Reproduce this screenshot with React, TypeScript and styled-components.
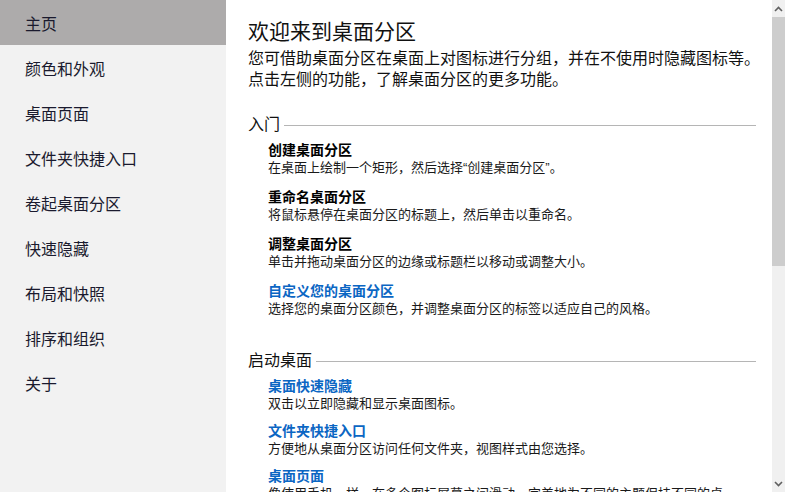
import React from 'react';
import { createGlobalStyle, styled } from 'styled-components';

const GlobalStyle = createGlobalStyle`
  html, body {
    margin: 0;
    padding: 0;
    height: 100%;
    overflow: hidden;
  }
  body {
    font-family: "Liberation Sans", "Noto Sans CJK SC", sans-serif;
    background: #ffffff;
  }
  #root {
    height: 100%;
  }
`;

interface Entry {
  title: string;
  desc: string;
  link?: boolean;
}

const NAV = ['主页', '颜色和外观', '桌面页面', '文件夹快捷入口', '卷起桌面分区', '快速隐藏', '布局和快照', '排序和组织', '关于'];

const SECTIONS: { name: string; gap: number; items: Entry[] }[] = [
  {
    name: '入门',
    gap: 13,
    items: [
      { title: '创建桌面分区', desc: '在桌面上绘制一个矩形，然后选择“创建桌面分区”。' },
      { title: '重命名桌面分区', desc: '将鼠标悬停在桌面分区的标题上，然后单击以重命名。' },
      { title: '调整桌面分区', desc: '单击并拖动桌面分区的边缘或标题栏以移动或调整大小。' },
      { title: '自定义您的桌面分区', desc: '选择您的桌面分区颜色，并调整桌面分区的标签以适应自己的风格。', link: true },
    ],
  },
  {
    name: '启动桌面',
    gap: 11,
    items: [
      { title: '桌面快速隐藏', desc: '双击以立即隐藏和显示桌面图标。', link: true },
      { title: '文件夹快捷入口', desc: '方便地从桌面分区访问任何文件夹，视图样式由您选择。', link: true },
      { title: '桌面页面', desc: '像使用手机一样，在多个图标屏幕之间滑动，完美地为不同的主题保持不同的桌面。', link: true },
    ],
  },
];

const App = () => {
  return (
    <>
      <GlobalStyle />
      <Layout>
        <Sidebar>
          {NAV.map((label, i) => (
            <NavItem key={label} $active={i === 0}>
              {label}
            </NavItem>
          ))}
        </Sidebar>
        <Main>
          <Title>欢迎来到桌面分区</Title>
          <Intro>
            <IntroLine>您可借助桌面分区在桌面上对图标进行分组，并在不使用时隐藏图标等。</IntroLine>
            <IntroLine>点击左侧的功能，了解桌面分区的更多功能。</IntroLine>
          </Intro>
          {SECTIONS.map((section) => (
            <Section key={section.name}>
              <SectionHeader>{section.name}</SectionHeader>
              <ItemList $gap={section.gap}>
                {section.items.map((item) => (
                  <Item key={item.title}>
                    <ItemTitle $link={!!item.link}>{item.title}</ItemTitle>
                    <ItemDesc>{item.desc}</ItemDesc>
                  </Item>
                ))}
              </ItemList>
            </Section>
          ))}
        </Main>
        <ScrollBar>
          <ScrollButton>
            <svg width="9" height="6" viewBox="0 0 9 6">
              <path d="M1 5 L4.5 1.5 L8 5" fill="none" stroke="#606060" strokeWidth="1.6" />
            </svg>
          </ScrollButton>
          <ScrollThumb />
          <ScrollTrack />
          <ScrollButton>
            <svg width="9" height="6" viewBox="0 0 9 6">
              <path d="M1 1 L4.5 4.5 L8 1" fill="none" stroke="#606060" strokeWidth="1.6" />
            </svg>
          </ScrollButton>
        </ScrollBar>
      </Layout>
    </>
  );
};

export default App;

const Layout = styled.div`
  display: flex;
  width: 100%;
  height: 100vh;
  overflow: hidden;
`;

const Sidebar = styled.nav`
  width: 226px;
  flex-shrink: 0;
  background-color: #f2f2f2;
  display: flex;
  flex-direction: column;
`;

const NavItem = styled.div<{ $active: boolean }>`
  height: 45px;
  display: flex;
  align-items: center;
  padding-left: 25px;
  font-size: 16px;
  color: #1a1a2e;
  background-color: ${({ $active }) => ($active ? '#adabab' : 'transparent')};
`;

const Main = styled.main`
  flex: 1;
  min-width: 0;
  padding: 18px 16px 0 22px;
  overflow: hidden;
  background: #ffffff;
`;

const Title = styled.h1`
  margin: 0;
  font-size: 21px;
  font-weight: 400;
  line-height: 28px;
  color: #111111;
`;

const Intro = styled.div`
  margin-top: 2px;
  font-size: 16px;
  line-height: 21px;
  color: #111111;
`;

const IntroLine = styled.div`
  white-space: nowrap;
`;

const Section = styled.section`
  margin-top: 24px;

  & + & {
    margin-top: 33px;
  }
`;

const SectionHeader = styled.h2`
  margin: 0;
  display: flex;
  align-items: center;
  gap: 4px;
  font-size: 16px;
  font-weight: 400;
  line-height: 22px;
  color: #111111;

  &::after {
    content: '';
    flex: 1;
    height: 1px;
    margin-top: 1px;
    background-color: #b5b5b5;
  }
`;

const ItemList = styled.div<{ $gap: number }>`
  display: flex;
  flex-direction: column;
  gap: ${({ $gap }) => $gap}px;
  padding-left: 20px;
  margin-top: 6px;
`;

const Item = styled.div`
  display: flex;
  flex-direction: column;
  max-width: 460px;
`;

const ItemTitle = styled.div<{ $link: boolean }>`
  font-size: 14px;
  font-weight: 700;
  line-height: 17px;
  color: ${({ $link }) => ($link ? '#0b66c3' : '#000000')};
`;

const ItemDesc = styled.div`
  font-size: 13px;
  line-height: 17px;
  color: #1a1a1a;
`;

const ScrollBar = styled.div`
  width: 13px;
  flex-shrink: 0;
  display: flex;
  flex-direction: column;
  background-color: #f0f0f0;
`;

const ScrollButton = styled.div`
  height: 17px;
  display: flex;
  align-items: center;
  justify-content: center;
`;

const ScrollThumb = styled.div`
  height: 249px;
  background-color: #cdcdcd;
`;

const ScrollTrack = styled.div`
  flex: 1;
`;
